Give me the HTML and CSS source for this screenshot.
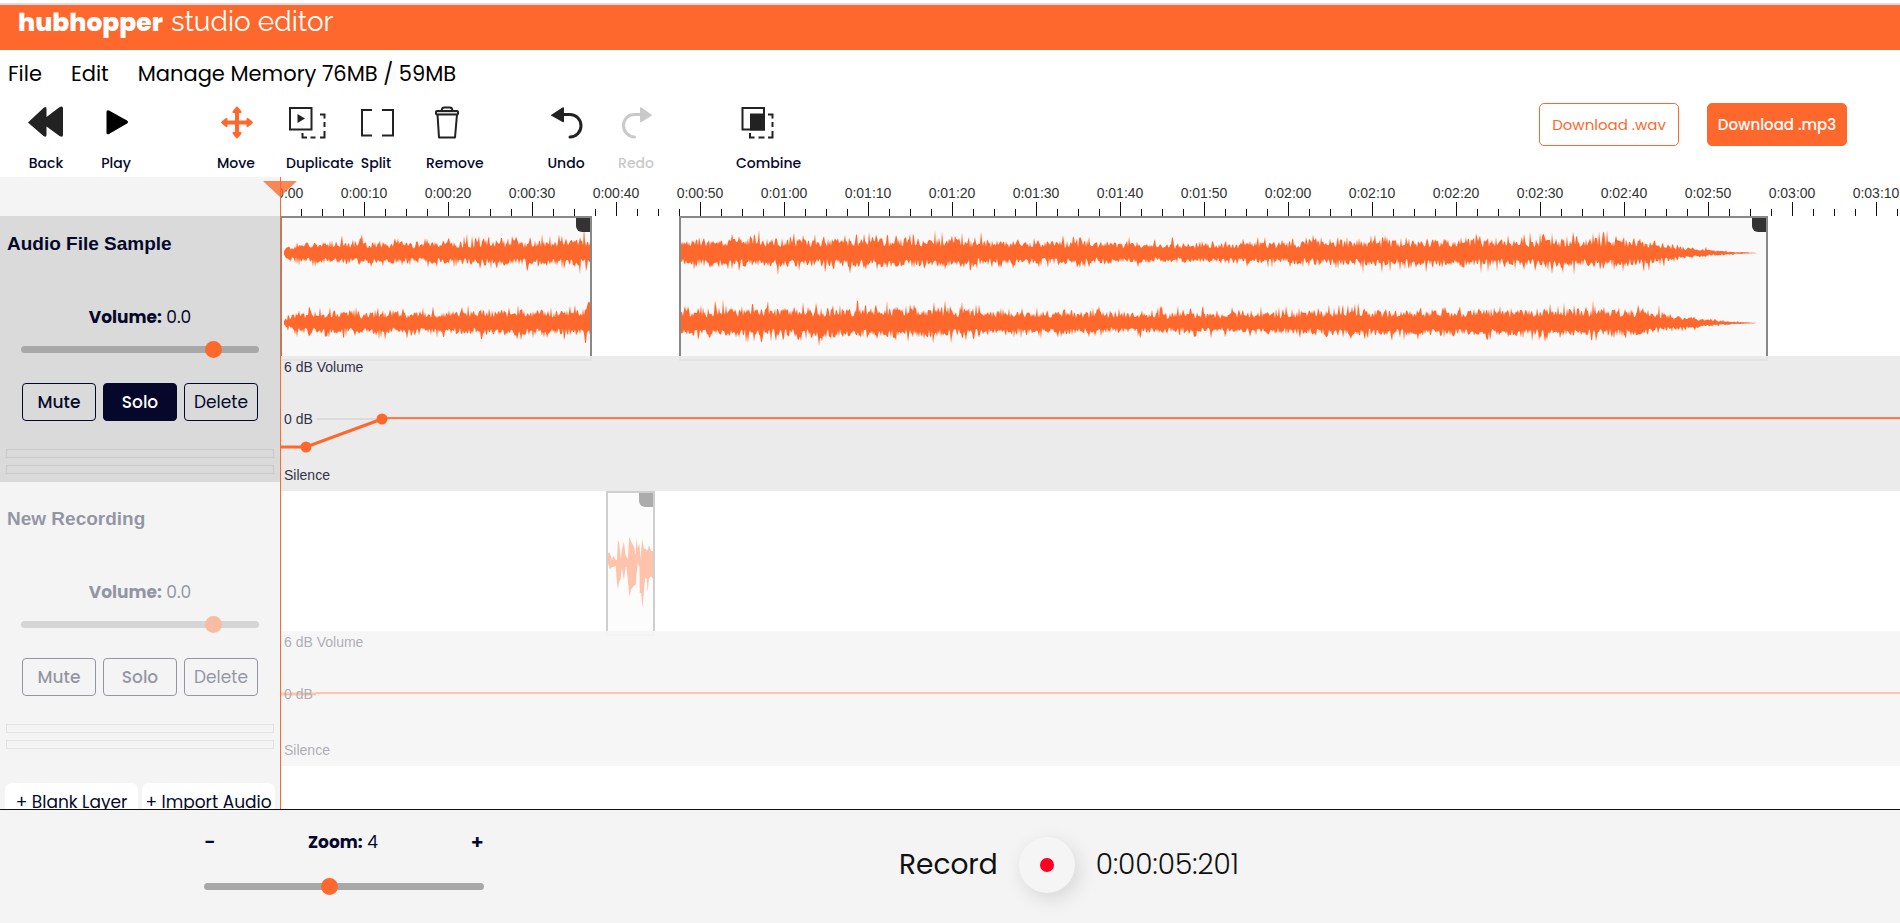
FILE: index.html
```html
<!DOCTYPE html>
<html lang="en">
<head>
<meta charset="utf-8">
<title>hubhopper studio editor</title>
<link rel="stylesheet" href="styles.css">
</head>
<body>
<header class="brand"><span class="brand-name">hubhopper</span><span class="brand-sub">studio editor</span></header>

<nav class="menu">
  <button type="button">File</button>
  <button type="button">Edit</button>
  <button type="button">Manage Memory 76MB / 59MB</button>
</nav>

<div class="toolbar">
  <div class="tool-group">
    <button type="button" class="tool">
      <svg viewBox="0 0 40 36"><path d="M3 16.500 18 2.500Q20.500 1 20.500 3.500V12L33 2.500Q37 0 37 3.500V30Q37 33 33.500 31L20.500 21.500V30Q20.500 33 17.500 31L2.500 18Q1.500 17 3 16.500Z" fill="#222"/></svg>
      <span>Back</span>
    </button>
    <button type="button" class="tool">
      <svg viewBox="0 0 40 36"><path d="M10.500 7Q10.500 4.500 13 5.500L31 15.500Q33 17 31 18.500L13 29Q10.500 30 10.500 28Z" fill="#000"/></svg>
      <span>Play</span>
    </button>
  </div>
  <div class="tool-group">
    <button type="button" class="tool">
      <svg viewBox="0 0 40 36" fill="#ff682c"><path d="M19 6h4v23h-4zM9 15.500h24v4H9z"/><path d="M21 1.500q.8 0 4.500 5Q26 8 24.500 8h-7Q16 8 16.500 6.500q3.700-5 4.500-5zM21 33.500q-.8 0-4.500-5Q16 27 17.500 27h7q1.500 0 1 1.500-3.700 5-4.500 5zM5 17.500q0-.8 5-4.500 1.500-.5 1.500 1v7q0 1.500-1.500 1-5-3.700-5-4.500zM37 17.500q0-.8-5-4.500-1.500-.5-1.500 1v7q0 1.500 1.500 1 5-3.700 5-4.500z"/></svg>
      <span>Move</span>
    </button>
    <button type="button" class="tool">
      <svg viewBox="0 0 40 36" fill="none" stroke="#222" stroke-width="2"><path d="M4 3h21.500v21.500H4z"/><path d="M11.500 9v9l7.500-4.500z" fill="#222" stroke="none"/><path d="M34 9.500h4.500v4M38.500 17v5M38.500 26v6.500H34M29.500 32.500h-5M21 32.500h-4.500V28"/></svg>
      <span>Duplicate</span>
    </button>
    <button type="button" class="tool">
      <svg viewBox="0 0 40 36" fill="none" stroke="#222" stroke-width="2"><path d="M16 5H6v25.500h10M26 5h11v25.500H26"/></svg>
      <span>Split</span>
    </button>
    <button type="button" class="tool">
      <svg viewBox="0 0 40 36" fill="none" stroke="#222" stroke-width="2" stroke-linejoin="round"><path d="M11.500 9.500 13 32.500h16L31 9.500"/><rect x="10" y="6" width="22" height="3.500" rx="1" fill="#ddd"/><path d="M15.500 6Q16 2.500 18 2.500h6q2.200 0 2.500 3.500"/></svg>
      <span>Remove</span>
    </button>
  </div>
  <div class="tool-group">
    <button type="button" class="tool">
      <svg viewBox="0 0 40 36"><path d="M5 10 16.500 2.500q1.500-1 1.500 1v12.500q0 2-1.500 1L5 10.500z" fill="#222"/><path d="M16 9.500h8c6 0 11 5 11 11.200S30 32 24 32" fill="none" stroke="#222" stroke-width="3" stroke-linecap="round"/></svg>
      <span>Undo</span>
    </button>
    <button type="button" class="tool" disabled>
      <svg viewBox="0 0 40 36"><path d="M36 10 25.500 2.500q-1.500-1-1.500 1v12.500q0 2 1.500 1L36 10.500z" fill="#c9c9c9"/><path d="M26 9.500h-8c-6 0-10.500 5-10.500 11.200S13 32 18.500 32" fill="none" stroke="#c9c9c9" stroke-width="3" stroke-linecap="round"/></svg>
      <span>Redo</span>
    </button>
  </div>
  <div class="tool-group">
    <button type="button" class="tool">
      <svg viewBox="0 0 40 36" fill="none" stroke="#222" stroke-width="2"><path d="M6.500 3H28v21.500H6.500z"/><path d="M14 8.500h15v17H14z" fill="#222" stroke="none"/><path d="M32 9.500h4.500v4M36.500 17v5M36.500 26v6.500H32M28.500 32.500h-6M18.500 32.500H14V28"/></svg>
      <span>Combine</span>
    </button>
  </div>
  <div class="downloads">
    <button type="button" class="download">Download .wav</button>
    <button type="button" class="download download-solid">Download .mp3</button>
  </div>
</div>

<main class="workspace">
  <aside class="sidebar">
    <section class="panel panel-active">
      <h2>Audio File Sample</h2>
      <label class="level" for="vol1"><b>Volume:</b> 0.0</label>
      <input id="vol1" class="slider" type="range" min="0" max="100" step="any" value="83.3">
      <div class="panel-buttons">
        <button type="button">Mute</button>
        <button type="button" class="on">Solo</button>
        <button type="button" class="thin">Delete</button>
      </div>
      <div class="meter"></div>
      <div class="meter"></div>
    </section>
    <section class="panel">
      <div class="dim">
      <h2>New Recording</h2>
      <label class="level" for="vol2"><b>Volume:</b> 0.0</label>
      <input id="vol2" class="slider" type="range" min="0" max="100" step="any" value="83.3">
      <div class="panel-buttons">
        <button type="button">Mute</button>
        <button type="button">Solo</button>
        <button type="button" class="thin">Delete</button>
      </div>
      <div class="meter"></div>
      <div class="meter"></div>
      </div>
    </section>
    <div class="add-layer">
      <button type="button">+ Blank Layer</button>
      <button type="button">+ Import Audio</button>
    </div>
  </aside>

  <div class="timeline">
    <div class="ruler" id="ruler"></div>
    <section class="track">
      <div class="lane">
        <div class="clip clip-intro"><svg class="wave" data-seed="7" data-shape="intro"></svg><i class="handle"></i></div>
        <div class="clip clip-main"><svg class="wave" data-seed="21" data-shape="main"></svg><i class="handle"></i></div>
      </div>
      <div class="envelope">
        <svg class="curve">
          <line x1="37" y1="63" x2="100%" y2="63" stroke="#ccc"/>
          <path d="M0 91H26L102 63" fill="none" stroke="#ff682c" stroke-width="3"/>
          <line x1="102" y1="62" x2="100%" y2="62" stroke="#ff7a45" stroke-width="2"/>
          <circle cx="26" cy="91" r="5.500" fill="#ff682c"/><circle cx="102" cy="63" r="5.500" fill="#ff682c"/>
        </svg>
        <span>6 dB Volume</span><span>0 dB</span><span>Silence</span>
      </div>
    </section>
    <section class="track dim">
      <div class="lane">
        <div class="clip clip-voice">
          <svg class="voice" viewBox="984 39 136 414"><path fill="#ff682c" d="M984 218 990 218 996 240 1000 228 1008 240 1011 240 1014 178 1018 190 1023 236 1026 210 1032 185 1037 225 1044 238 1048 170 1054 185 1062 200 1068 225 1070 172 1074 205 1079 190 1082 240 1087 175 1092 205 1096 205 1103 212 1108 195 1114 213 1120 213 1120 296 1114 290 1108 295 1104 338 1101 295 1096 295 1092 342 1088 385 1084 340 1080 340 1079 262 1074 250 1070 285 1068 315 1062 318 1054 328 1049 352 1045 310 1040 262 1037 262 1032 302 1026 262 1022 298 1018 305 1014 330 1010 298 1008 258 996 262 990 268 984 250Z"/></svg>
          <i class="handle"></i>
        </div>
      </div>
      <div class="envelope">
        <svg class="curve">
          <line x1="0" y1="63" x2="36" y2="63" stroke="#ff682c" stroke-width="3"/>
          <line x1="36" y1="64" x2="100%" y2="64" stroke="#ddd"/>
          <line x1="36" y1="62" x2="100%" y2="62" stroke="#ff682c" stroke-width="2"/>
        </svg>
        <span>6 dB Volume</span><span>0 dB</span><span>Silence</span>
      </div>
    </section>
  </div>
  <svg class="playhead" viewBox="0 0 34 16"><path d="M0 0h34L17 16z" fill="#ff682c" fill-opacity=".8"/></svg>
  <div class="playline"></div>
</main>

<footer class="transport">
  <div class="zoom">
    <div class="zoom-head">
      <button type="button" aria-label="Zoom out">−</button>
      <label for="zoom"><b>Zoom:</b> 4</label>
      <button type="button" aria-label="Zoom in">+</button>
    </div>
    <input id="zoom" class="slider" type="range" min="0" max="100" step="any" value="44.5">
  </div>
  <div class="record">
    <label for="rec">Record</label>
    <button type="button" id="rec" class="record-button"><i></i></button>
    <output class="clock">0:00:05:201</output>
  </div>
</footer>
<script src="app.js"></script>
</body>
</html>
```
FILE: styles.css
```css
* { box-sizing: border-box; }
body {
  margin: 0;
  height: 100vh;
  display: flex;
  flex-direction: column;
  overflow: hidden;
  background: #fff;
  color: #05082b;
  font-family: Poppins, Inter, sans-serif;
  font-size: 17px;
}
button {
  margin: 0;
  padding: 0;
  border: 0;
  background: none;
  color: inherit;
  font: inherit;
}
.brand {
  flex: none;
  margin-top: 3px;
  height: 47px;
  border-top: 2px solid #dcdcdf;
  padding: 0 18px;
  display: flex;
  align-items: baseline;
  gap: 8px;
  background: #ff682c;
  color: #fff;
  line-height: 34px;
}
.brand-name { font-size: 25px; font-weight: 800; }
.brand-sub { font-family: Raleway, Lato, sans-serif; font-size: 28px; }

.menu {
  flex: none;
  display: flex;
  gap: 29px;
  padding: 9px 8px 0;
  height: 49px;
  align-items: flex-start;
  color: #000;
  font-size: 21px;
  line-height: 30px;
}
.toolbar {
  flex: none;
  display: flex;
  gap: 50px;
  height: 78px;
  padding: 6px 53px 0 11px;
}
.tool-group { display: flex; }
.tool {
  width: 70px;
  padding: 0 15px;
  display: flex;
  flex-direction: column;
  align-items: stretch;
  gap: 12px;
  font-size: 14px;
  font-weight: 500;
  line-height: 20px;
  white-space: nowrap;
}
.tool svg { display: block; width: 40px; height: 36px; }
.tool:disabled { color: #c9c9c9; }
.downloads { display: flex; gap: 28px; margin-left: auto; margin-top: -2px; }
.download {
  width: 140px;
  height: 43px;
  border: 1px solid #ff682c;
  border-radius: 5px;
  color: #ff682c;
  font-size: 15px;
}
.download-solid { background: #ff682c; color: #fff; font-weight: 500; }

.workspace {
  position: relative;
  flex: 1;
  min-height: 0;
  display: flex;
  overflow: hidden;
}
.sidebar {
  flex: none;
  width: 280px;
  padding-top: 39px;
  background: #f4f4f4;
}
.panel { height: 266px; margin-bottom: 9px; padding: 17px 6px 0; }
.panel-active { background: #dadada; }
.panel h2 {
  margin: 0 1px;
  font: bold 19px/22px "Liberation Sans", sans-serif;
}
.level { display: block; margin-top: 50px; text-align: center; line-height: 24px; }
.slider {
  -webkit-appearance: none;
  appearance: none;
  display: block;
  height: 17px;
  margin: 0;
  background: none;
}
.slider::-webkit-slider-runnable-track {
  height: 7px;
  border-radius: 4px;
  background: #a8a8a8;
}
.slider::-webkit-slider-thumb {
  -webkit-appearance: none;
  width: 17px;
  height: 17px;
  margin-top: -5px;
  border: 0;
  border-radius: 50%;
  background: #ff682c;
}
.panel .slider { width: 238px; margin: 12px 15px 25px; }
.panel-buttons {
  display: grid;
  grid-template-columns: repeat(3, 74px);
  gap: 7px;
  margin: 0 16px 28px;
}
.panel-buttons button {
  height: 38px;
  border: 1px solid #05082b;
  border-radius: 4px;
  font-weight: 500;
}
.panel-buttons .thin { font-weight: 400; }
.panel-buttons .on { background: #05082b; color: #fff; }
.meter { height: 9px; margin-bottom: 7px; border: 1px solid #c8c8c8; }
.dim { opacity: .4; }
.add-layer {
  display: grid;
  grid-template-columns: 133px 133px;
  gap: 4px;
  padding: 17px 5px 0;
}
.add-layer button { height: 38px; border-radius: 7px; background: #fff; white-space: nowrap; }

.timeline { flex: 1; min-width: 0; overflow: hidden; font: 14px/16px "Liberation Sans", sans-serif; }
.ruler { display: flex; height: 39px; color: #333; }
.ruler-step {
  flex: none;
  width: 84px;
  display: flex;
  flex-direction: column;
  justify-content: space-between;
  padding-top: 8px;
}
.ruler-step span { width: 84px; margin-left: -42px; text-align: center; }
.ticks { display: flex; align-items: flex-end; }
.ticks i { width: 21px; height: 7px; border-left: 1px solid #111; }
.ticks i:first-child { height: 14px; }
.track { height: 275px; }
.lane { height: 140px; display: flex; }
.clip {
  position: relative;
  flex: none;
  height: 145px;
  border: 2px solid #888;
  background: #f9f9f9;
}
.clip-intro { width: 312px; margin-right: 87px; }
.clip-main { width: 1089px; }
.clip-voice { width: 49px; margin-left: 326px; }
.wave { display: block; width: 100%; height: 141px; }
.voice { display: block; width: 45px; height: 138px; }
.handle {
  position: absolute;
  top: 0;
  right: 0;
  width: 14px;
  height: 14px;
  border-bottom-left-radius: 6px;
  background: #333;
}
.envelope {
  position: relative;
  height: 135px;
  padding: 3px 4px;
  display: grid;
  grid-template-rows: 52px 56px 20px;
  background: rgba(233, 233, 233, .93);
}
.envelope span { position: relative; color: #333348; }
.curve { position: absolute; left: 0; top: 0; width: 100%; height: 100%; }
.playhead { position: absolute; left: 263px; top: 4px; width: 34px; height: 16px; }
.playline { position: absolute; left: 280px; top: 0; bottom: 0; width: 1px; background: #ff682c; }

.transport {
  flex: none;
  height: 114px;
  display: flex;
  border-top: 1px solid #111;
  background: #f4f4f4;
}
.zoom { width: 280px; margin-left: 204px; padding-top: 18px; }
.zoom .slider { width: 280px; margin-top: 22px; }
.zoom-head { display: flex; justify-content: space-between; line-height: 28px; }
.zoom-head button { line-height: 24px; font-size: 20px; font-weight: 600; }
.record {
  display: flex;
  align-items: center;
  gap: 21px;
  height: 109px;
  margin-left: 415px;
  color: #111;
  font-size: 28px;
}
.record-button {
  width: 56px;
  height: 56px;
  display: grid;
  place-items: center;
  border-radius: 50%;
  background: #f5f5f5;
  box-shadow: 4px 6px 20px rgba(0, 0, 0, .12);
}
.record-button i { width: 14px; height: 14px; border-radius: 50%; background: #ff0022; }
.clock { font-weight: 300; }
```
FILE: app.js
```js
// Ruler: one step per ten seconds, four ticks per step, as many as fit.
const ruler = document.getElementById('ruler');
const steps = Math.ceil(ruler.clientWidth / 84);
for (let i = 0; i < steps; i++) {
  const s = i * 10;
  const step = document.createElement('div');
  step.className = 'ruler-step';
  const mm = String(Math.floor(s / 60)).padStart(2, '0');
  const ss = String(s % 60).padStart(2, '0');
  step.innerHTML = `<span>0:${mm}:${ss}</span><div class="ticks"><i></i><i></i><i></i><i></i></div>`;
  ruler.append(step);
}

// Loudness of each clip as [x, amplitude] stops.
const shapes = {
  intro: [[2, 2], [4, 5], [20, 10], [160, 10], [230, 12], [280, 11], [308, 14]],
  main: [[0, 12], [60, 13], [250, 14], [310, 11], [340, 10], [380, 11], [420, 10], [500, 9], [590, 10], [660, 12], [780, 12],
    [950, 13], [975, 10], [995, 7], [1030, 3], [1050, 1.4], [1072, 0.4], [1077, 0]]
};

function random(seed) {
  return () => (seed = (seed * 16807) % 2147483647) / 2147483647;
}

function level(stops, x) {
  for (let i = 1; i < stops.length; i++) {
    if (x <= stops[i][0]) {
      const [x0, a] = stops[i - 1], [x1, b] = stops[i];
      return a + (b - a) * Math.max(0, x - x0) / (x1 - x0);
    }
  }
  return 0;
}

document.querySelectorAll('.wave').forEach(svg => {
  const stops = shapes[svg.dataset.shape];
  const rnd = random(+svg.dataset.seed * 7919);
  const end = stops[stops.length - 1][0];
  let d = '';
  for (const mid of [35, 105]) {
    const top = [], bottom = [];
    for (let x = stops[0][0]; x <= end; x++) {
      const a = level(stops, x);
      const up = a * (0.45 + 0.65 * rnd() + 0.9 * Math.pow(rnd(), 7));
      const down = a * (0.45 + 0.6 * rnd() + 0.8 * Math.pow(rnd(), 8));
      top.push(`${x} ${(mid - up).toFixed(1)}`);
      bottom.unshift(`${x} ${(mid + down).toFixed(1)}`);
    }
    d += `M${top.join(' ')} ${bottom.join(' ')}Z`;
  }
  svg.innerHTML = `<path d="${d}" fill="#ff682c"/>`;
});
```
